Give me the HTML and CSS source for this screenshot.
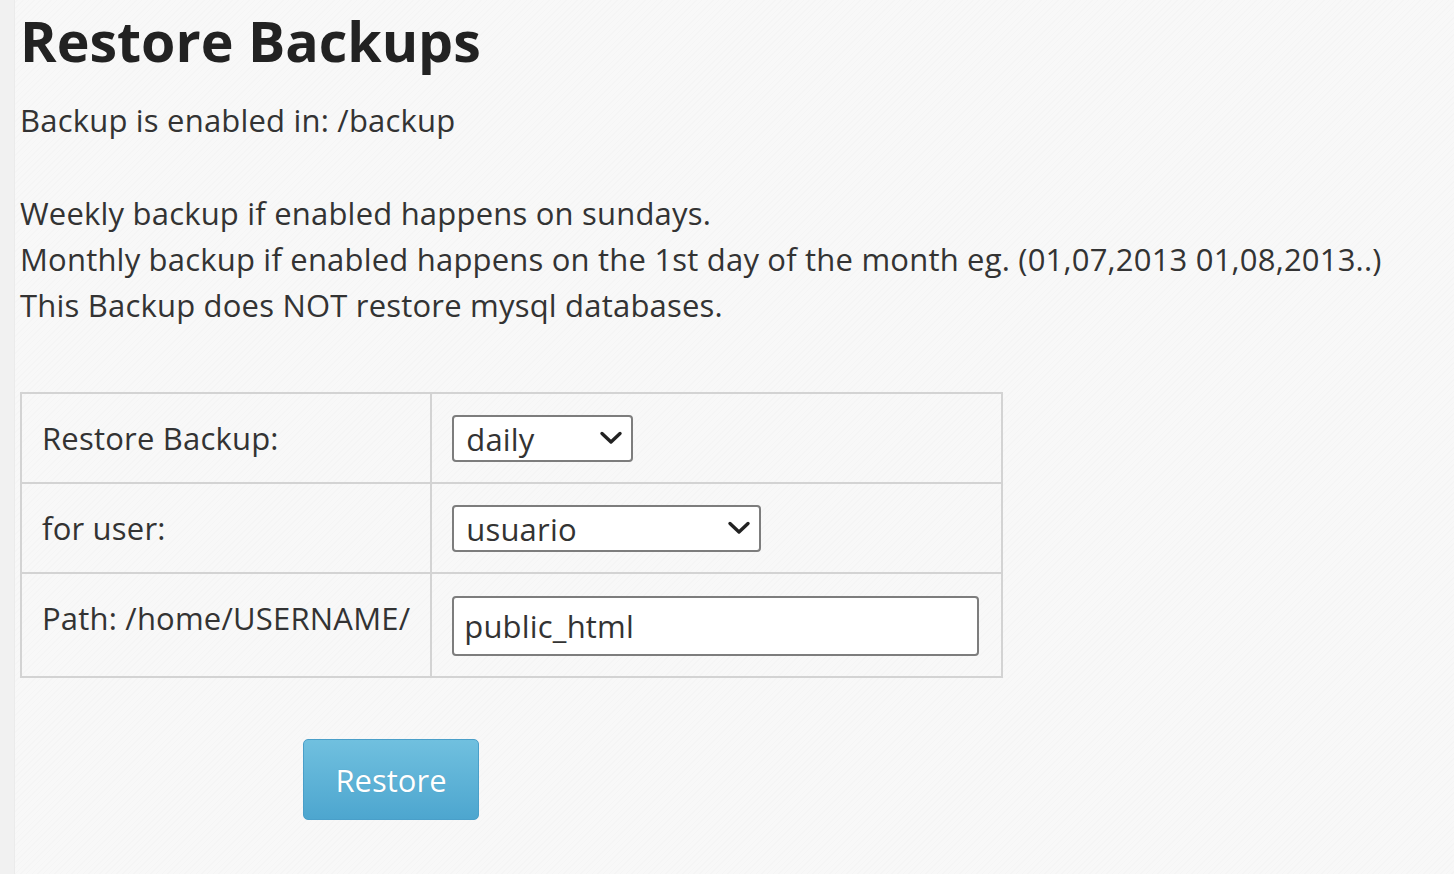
FILE: index.html
```html
<!DOCTYPE html>
<html>
<head>
<meta charset="utf-8">
<link rel="stylesheet" href="styles.css">
</head>
<body>
<div class="page">
  <div class="edge"></div>
  <main class="content">
    <h1 class="title">Restore Backups</h1>
    <p class="info">Backup is enabled in: /backup<br><br>Weekly backup if enabled happens on sundays.<br>Monthly backup if enabled happens on the 1st day of the month eg. (01,07,2013 01,08,2013..)<br>This Backup does NOT restore mysql databases.</p>
    <form class="form">
      <table class="grid">
        <tr>
          <td class="label">Restore Backup:</td>
          <td class="field">
            <span class="select-wrap sel-small">
              <select class="select"><option>daily</option><option>weekly</option><option>monthly</option></select>
              <svg class="chev" width="24" height="14" viewBox="0 0 24 14"><path d="M3 2.5 L12 11 L21 2.5" fill="none" stroke="#222" stroke-width="3.4" stroke-linecap="round" stroke-linejoin="round"/></svg>
            </span>
          </td>
        </tr>
        <tr>
          <td class="label">for user:</td>
          <td class="field">
            <span class="select-wrap sel-large">
              <select class="select"><option>usuario</option></select>
              <svg class="chev" width="24" height="14" viewBox="0 0 24 14"><path d="M3 2.5 L12 11 L21 2.5" fill="none" stroke="#222" stroke-width="3.4" stroke-linecap="round" stroke-linejoin="round"/></svg>
            </span>
          </td>
        </tr>
        <tr>
          <td class="label">Path: /home/USERNAME/</td>
          <td class="field">
            <input class="text" type="text" value="public_html">
          </td>
        </tr>
      </table>
      <div class="actions">
        <button type="button" class="btn">Restore</button>
      </div>
    </form>
  </main>
</div>
</body>
</html>
```
FILE: styles.css
```css
html, body {
  margin: 0;
  padding: 0;
}
body {
  width: 1454px;
  height: 874px;
  overflow: hidden;
  font-family: "Open Sans", "Noto Sans", sans-serif;
  color: #333;
  background-color: #f8f8f8;
  background-image: repeating-linear-gradient(135deg, rgba(0,0,0,0.012) 0px, rgba(0,0,0,0.012) 1px, transparent 1px, transparent 4px);
}
.page {
  display: flex;
  min-height: 874px;
}
.edge {
  width: 14px;
  flex: none;
  background: #f1f1f1;
  border-right: 1px solid #ebebeb;
}
.content {
  flex: 1;
  padding-left: 5px;
}
.title {
  margin: 0;
  padding-top: 4px;
  font-size: 55.5px;
  line-height: 74px;
  font-weight: 700;
  color: #222;
  letter-spacing: 0;
}
.info {
  margin: 19px 0 0 0;
  font-size: 31px;
  line-height: 46.3px;
  letter-spacing: 0.2px;
  color: #333;
}
.form {
  margin-top: 64px;
}
.grid {
  border-collapse: collapse;
  border: 2px solid #d3d3d3;
}
.grid td {
  border: 2px solid #d3d3d3;
  vertical-align: top;
  padding: 21px 20px 20px 20px;
}
.label {
  width: 368px;
  font-size: 31px;
  line-height: 46px;
  letter-spacing: 0.2px;
  color: #333;
  white-space: nowrap;
}
.field {
  width: 529px;
}
.select-wrap {
  position: relative;
  display: inline-block;
  vertical-align: top;
}
.select {
  -webkit-appearance: none;
  appearance: none;
  display: block;
  box-sizing: border-box;
  height: 47px;
  margin: 0;
  padding: 0 0 0 12px;
  font-family: "Open Sans", "Noto Sans", sans-serif;
  font-size: 31px;
  letter-spacing: 0.2px;
  color: #333;
  background: #fff;
  border: 2px solid #7d7d7d;
  border-radius: 4px;
  outline: none;
}
.sel-small .select {
  width: 181px;
}
.sel-large .select {
  width: 309px;
}
.chev {
  position: absolute;
  right: 10px;
  top: 16px;
  pointer-events: none;
}
.text {
  display: block;
  box-sizing: border-box;
  width: 527px;
  height: 60px;
  margin: 1px 0 0 0;
  padding: 0 10px;
  font-family: "Open Sans", "Noto Sans", sans-serif;
  font-size: 31px;
  letter-spacing: 0.2px;
  color: #333;
  background: #fff;
  border: 2px solid #7d7d7d;
  border-radius: 4px;
  outline: none;
}
.actions {
  margin-top: 61px;
  padding-left: 283px;
}
.btn {
  width: 176px;
  height: 81px;
  font-family: "Open Sans", "Noto Sans", sans-serif;
  font-size: 31px;
  letter-spacing: 0;
  color: #fff;
  background: linear-gradient(#70c0df, #4da6cf);
  border: 1px solid #4a9fc9;
  border-radius: 5px;
  text-shadow: 0 0 1px rgba(0,0,0,0.15);
  cursor: pointer;
}
```
